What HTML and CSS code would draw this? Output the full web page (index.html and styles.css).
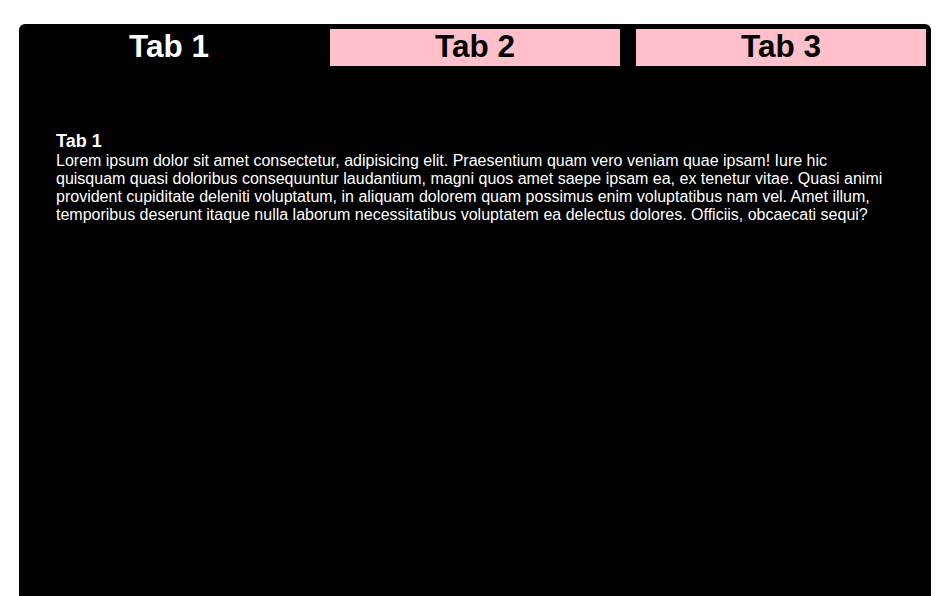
FILE: index.html
```html
<!DOCTYPE html>
<html lang="en">
<head>
<meta charset="utf-8">
<title>Tabs</title>
<link rel="stylesheet" href="styles.css">
</head>
<body>
<div class="tabs">
  <div class="tab-bar">
    <div class="tab active">Tab 1</div>
    <div class="tab">Tab 2</div>
    <div class="tab">Tab 3</div>
  </div>
  <div class="panel">
    <h3 class="panel-title">Tab 1</h3>
    <p class="panel-text">Lorem ipsum dolor sit amet consectetur, adipisicing elit. Praesentium quam vero veniam quae ipsam! Iure hic quisquam quasi doloribus consequuntur laudantium, magni quos amet saepe ipsam ea, ex tenetur vitae. Quasi animi provident cupiditate deleniti voluptatum, in aliquam dolorem quam possimus enim voluptatibus nam vel. Amet illum, temporibus deserunt itaque nulla laborum necessitatibus voluptatem ea delectus dolores. Officiis, obcaecati sequi?</p>
  </div>
</div>
</body>
</html>
```
FILE: styles.css
```css
html, body {
  margin: 0;
  padding: 0;
  background: #ffffff;
  font-family: "Liberation Sans", Arial, sans-serif;
  overflow: hidden;
}

.tabs {
  box-sizing: border-box;
  width: 912px;
  height: 572px;
  margin: 24px 0 0 19px;
  padding: 5px;
  background: #000000;
  border-radius: 6px 6px 0 0;
}

.tab-bar {
  display: flex;
  gap: 16px;
}

.tab {
  flex: 1;
  height: 37px;
  box-sizing: border-box;
  padding-bottom: 2px;
  font-size: 31.5px;
  line-height: 34px;
  font-weight: bold;
  text-align: center;
  background: #ffc0cb;
  color: #000000;
}

.tab.active {
  background: #000000;
  color: #ffffff;
}

.panel {
  padding: 65px 32px 0 32px;
  color: #ffffff;
}

.panel-title {
  margin: 0;
  font-size: 18px;
  font-weight: bold;
}

.panel-text {
  margin: 0;
  font-size: 16px;
}
```
